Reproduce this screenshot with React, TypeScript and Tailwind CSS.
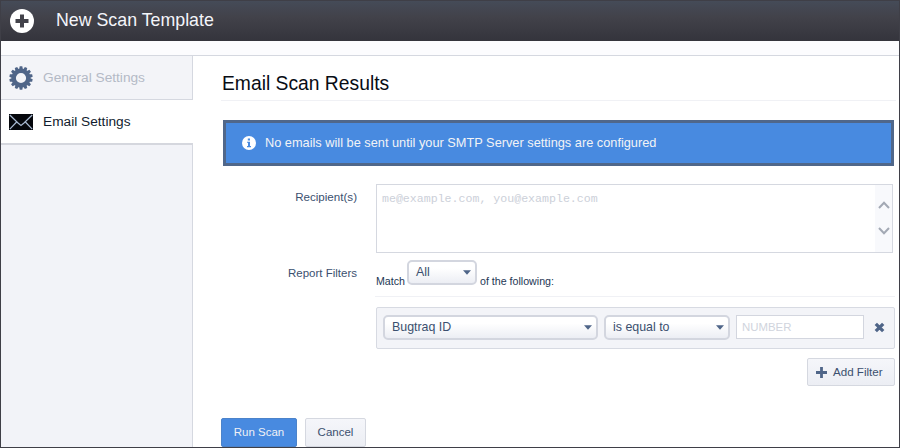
import React from "react";

function GearIcon() {
  const teeth = Array.from({ length: 14 }, (_, i) => (i * 360) / 14);
  return (
    <svg className="block h-6 w-6" viewBox="-12 -12 24 24">
      <g fill="#4f6588">
        {teeth.map((a) => (
          <path key={a} d="M-2-8L-1.3-11.7H1.3L2-8Z" transform={`rotate(${a})`} />
        ))}
      </g>
      <circle r="7.3" fill="none" stroke="#4f6588" strokeWidth="4.4" />
    </svg>
  );
}

function EnvelopeIcon() {
  return (
    <svg className="block h-4 w-6" viewBox="0 0 24 16">
      <path d="M0 0H24V16H0Z" fill="#05070c" />
      <path d="M0.8 1L9 9L12 11.4L15 9L23.2 1M0.8 15.2L7.6 8M23.2 15.2L16.4 8" fill="none" stroke="#a9bbd4" strokeWidth="1.2" />
    </svg>
  );
}

function Caret() {
  return (
    <svg className="block h-[5px] w-[8px]" viewBox="0 0 8 5">
      <path d="M0 0.3H8L4 4.8Z" fill="#4f6588" />
    </svg>
  );
}

function Select({ label, className }: { label: string; className: string }) {
  return (
    <div
      className={`flex h-[25px] items-center justify-between rounded-[5px] border-2 border-[#d3d6df] bg-gradient-to-b from-white from-30% to-[#eceef4] text-[12.4px] text-[#3b506f] ${className}`}
    >
      <span>{label}</span>
      <Caret />
    </div>
  );
}

export default function App() {
  return (
    <div className="flex h-[448px] w-[900px] flex-col overflow-hidden border border-[#3f3f47] bg-white font-['Liberation_Sans',Arial,sans-serif] leading-none whitespace-nowrap">
      <header className="flex h-10 shrink-0 items-center bg-gradient-to-b from-[#454b58] via-[#42424a] via-40% to-[#34343c] pl-[9px]">
        <svg className="block h-6 w-6" viewBox="0 0 24 24">
          <circle cx="12" cy="12" r="12" fill="#fff" />
          <path d="M10 5.5H14V10H18.5V14H14V18.5H10V14H5.5V10H10Z" fill="#42424a" />
        </svg>
        <h1 className="pl-[22px] text-[17.8px] text-[#f4f5fa]">New Scan Template</h1>
      </header>
      <div className="h-[15px] shrink-0 border-b border-[#d5d8e0] bg-[#fcfcfe]" />
      <div className="flex min-h-0 flex-1">
        <nav className="flex w-[192px] shrink-0 flex-col text-[13.7px]">
          <div className="flex h-11 items-center gap-[10px] border-r border-b border-[#d5d8e0] bg-[#f3f4f8] pl-2 text-[#b4bac6]">
            <GearIcon />
            <span>General Settings</span>
          </div>
          <div className="flex h-[45px] items-center gap-[10px] border-b-2 border-[#d5d7de] bg-white pl-2 text-[#111c2e]">
            <EnvelopeIcon />
            <span>Email Settings</span>
          </div>
          <div className="flex-1 border-r border-[#d5d8e0] bg-[#f2f3f8]" />
        </nav>
        <main className="flex-1 pl-7">
          <h2 className="mr-[3px] h-[45px] border-b border-[#f0f1f5] pt-[18px] pl-px text-[19.3px] text-[#080c14]">Email Scan Results</h2>
          <div className="mt-[19px] ml-[2px] flex h-[46px] w-[671px] items-center border-[3px] border-[#50678a] bg-[#488ae0] pl-4 text-[12.77px] text-[#f2f3f6]">
            <svg className="mr-[9px] block h-[14px] w-[14px]" viewBox="0 0 14 14">
              <circle cx="7" cy="7" r="7" fill="#fff" />
              <path d="M5.8 2.5H8V4.5H5.8ZM5 5.7H8V10H9V11.2H5V10H6V6.8H5Z" fill="#488ae0" />
            </svg>
            <span>No emails will be sent until your SMTP Server settings are configured</span>
          </div>
          <div className="mt-[18px] flex">
            <div className="w-[136px] shrink-0 pt-[7px] text-right text-[11.6px] text-[#3b506f]">Recipient(s)</div>
            <div className="ml-[19px] flex h-[69px] w-[517px] justify-between border border-[#d5d8e0] bg-white">
              <span className="pt-[8px] pl-[5px] font-['Liberation_Mono',monospace] text-[11.6px] text-[#ccd0d9]">me@example.com, you@example.com</span>
              <div className="flex w-[17px] flex-col items-center gap-[18px] bg-[#f8f9fc] pt-4">
                <svg className="block h-2 w-3" viewBox="0 0 12 8">
                  <path d="M1 7L6 1.7L11 7" fill="none" stroke="#a3a9b4" strokeWidth="2" />
                </svg>
                <svg className="block h-2 w-3" viewBox="0 0 12 8">
                  <path d="M1 1L6 6.3L11 1" fill="none" stroke="#a3a9b4" strokeWidth="2" />
                </svg>
              </div>
            </div>
          </div>
          <div className="mt-[7px] flex">
            <div className="w-[136px] shrink-0 pt-2 text-right text-[11.5px] text-[#3b506f]">Report Filters</div>
            <div className="ml-[18px] w-[520px] shrink-0">
              <div className="flex h-[37px] border-b border-[#f0f1f5] pl-px text-[10.65px] text-[#243754]">
                <span className="pt-[16px]">Match</span>
                <Select label="All" className="ml-[2px] w-[70px] pr-1 pl-[7px]" />
                <span className="ml-[3px] pt-[16px]">of the following:</span>
              </div>
              <div className="mt-[10px] ml-px flex h-[42px] w-[519px] items-center rounded-[2px] border border-[#d7dae2] bg-[#f3f4f8] pb-[2px] pl-[6px]">
                <Select label="Bugtraq ID" className="w-[215px] pr-1 pl-[7px]" />
                <Select label="is equal to" className="ml-[6px] w-[126px] pr-1 pl-[7px]" />
                <div className="ml-[6px] flex h-6 w-[128px] items-center border border-[#d3d6df] bg-white pt-px pl-[5px] text-[11.4px] text-[#d0d4dd]">NUMBER</div>
                <svg className="ml-[10px] block h-[11px] w-[11px]" viewBox="0 0 11 11">
                  <path d="M1.8 1.8L9.2 9.2M9.2 1.8L1.8 9.2" stroke="#4f6588" strokeWidth="3.3" />
                </svg>
              </div>
              <button className="mt-[9px] ml-auto flex h-[28px] w-[88px] items-center rounded-[2px] border border-[#d5d8e0] bg-gradient-to-b from-[#f5f6fa] to-[#eceef4] pl-[8px] text-[11.6px] text-[#3b506f]">
                <svg className="mr-[6px] block h-[11px] w-[11px]" viewBox="0 0 11 11">
                  <path d="M5.5 0V11M0 5.5H11" stroke="#4f6588" strokeWidth="2.8" />
                </svg>
                Add Filter
              </button>
            </div>
          </div>
          <div className="mt-[32px] flex gap-2 text-[11.5px]">
            <button className="h-[29px] w-[76px] rounded-[2px] border border-[#4c83ca] bg-[#488ae0] text-[#f0f1f5]">Run Scan</button>
            <button className="h-[29px] w-[61px] rounded-[2px] border border-[#d5d8e0] bg-gradient-to-b from-[#f5f6fa] to-[#eceef4] text-[#3b506f]">Cancel</button>
          </div>
        </main>
      </div>
    </div>
  );
}
